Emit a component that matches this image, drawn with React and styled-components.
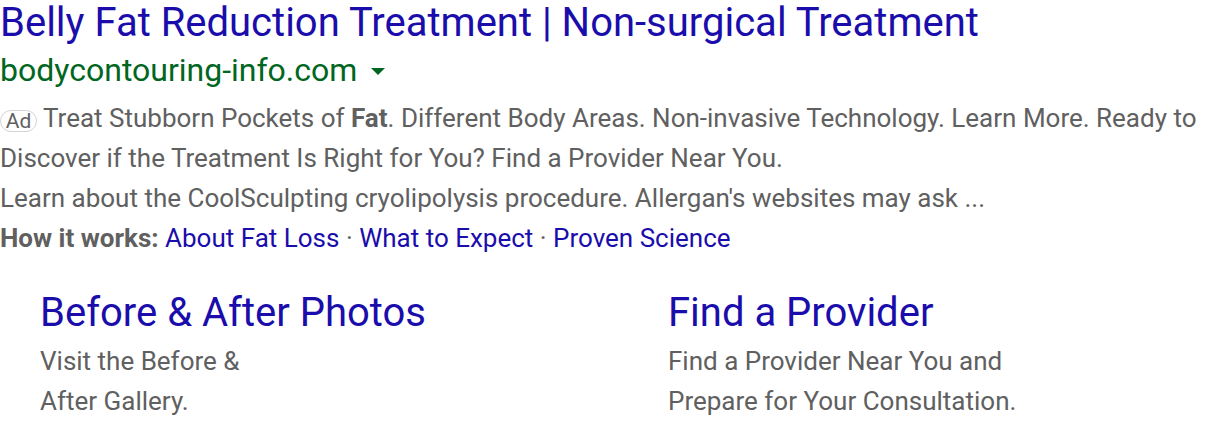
import React from "react";
import styled, { createGlobalStyle } from "styled-components";

const Global = createGlobalStyle`
  html, body { margin: 0; padding: 0; background: #fff; }
  body { font-family: Roboto, Arial, sans-serif; }
`;

const Wrap = styled.div`
  width: 1216px;
  height: 430px;
  overflow: hidden;
  box-sizing: border-box;
`;

const Title = styled.a`
  display: block;
  font-size: 40px;
  line-height: 48px;
  color: #1a0dab;
  text-decoration: none;
  white-space: nowrap;
  margin-top: -1px;
`;

const UrlRow = styled.div`
  display: flex;
  align-items: center;
  gap: 14px;
  font-size: 32px;
  line-height: 40px;
  color: #006621;
  margin-top: 3px;
`;

const Caret = styled.span`
  width: 0;
  height: 0;
  border-left: 7px solid transparent;
  border-right: 7px solid transparent;
  border-top: 7px solid #006621;
  margin-top: 2px;
`;

const Snippet = styled.div`
  font-size: 26px;
  line-height: 40px;
  color: #606060;
  margin-top: 8px;
`;

const AdBadge = styled.span`
  display: inline-block;
  box-sizing: border-box;
  border: 1px solid #d4d4d4;
  border-radius: 11px;
  font-size: 21px;
  line-height: 20px;
  height: 22px;
  width: 37px;
  text-align: center;
  margin-right: 6px;
  color: #606060;
  vertical-align: -1px;
`;

const Bold = styled.b`
  font-weight: 700;
`;

const Link = styled.a`
  color: #1a0dab;
  text-decoration: none;
`;

const Sitelinks = styled.div`
  display: grid;
  grid-template-columns: 628px 1fr;
  padding-left: 40px;
  margin-top: 31px;
`;

const Sitelink = styled.div`
  display: flex;
  flex-direction: column;
`;

const SitelinkTitle = styled.a`
  font-size: 40px;
  line-height: 48px;
  color: #1a0dab;
  text-decoration: none;
  margin-bottom: 4px;
`;

const SitelinkDesc = styled.div`
  font-size: 26px;
  line-height: 40px;
  color: #606060;
`;

export default function App() {
  return (
    <Wrap>
      <Global />
      <Title href="#">Belly Fat Reduction Treatment | Non-surgical Treatment</Title>
      <UrlRow>
        <span>bodycontouring-info.com</span>
        <Caret />
      </UrlRow>
      <Snippet>
        <AdBadge>Ad</AdBadge>Treat Stubborn Pockets of <Bold>Fat</Bold>. Different Body Areas. Non-invasive Technology. Learn More. Ready to Discover if the Treatment Is Right for You? Find a Provider Near You.
        <br />
        Learn about the CoolSculpting cryolipolysis procedure. Allergan's websites may ask ...
        <br />
        <Bold>How it works:</Bold> <Link href="#">About Fat Loss</Link> · <Link href="#">What to Expect</Link> · <Link href="#">Proven Science</Link>
      </Snippet>
      <Sitelinks>
        <Sitelink>
          <SitelinkTitle href="#">Before &amp; After Photos</SitelinkTitle>
          <SitelinkDesc>Visit the Before &amp;<br />After Gallery.</SitelinkDesc>
        </Sitelink>
        <Sitelink>
          <SitelinkTitle href="#">Find a Provider</SitelinkTitle>
          <SitelinkDesc>Find a Provider Near You and<br />Prepare for Your Consultation.</SitelinkDesc>
        </Sitelink>
      </Sitelinks>
    </Wrap>
  );
}
